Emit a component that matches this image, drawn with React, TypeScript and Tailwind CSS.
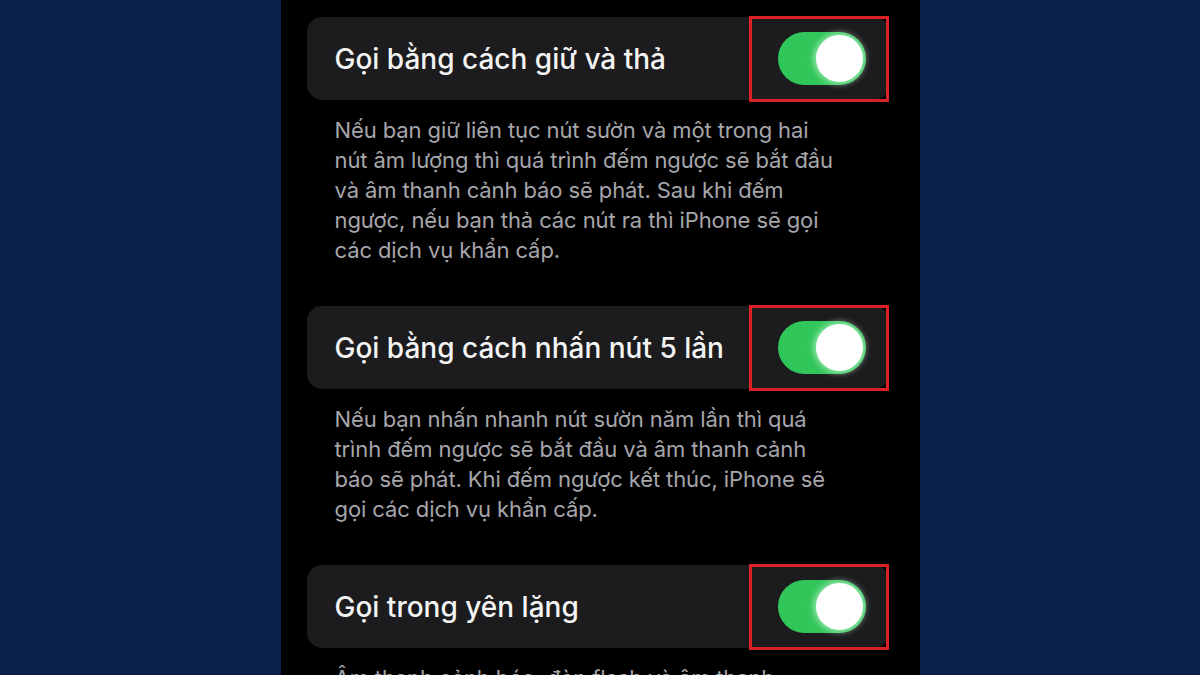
import React from 'react';

interface Setting {
  title: string;
  lines: string[];
}

const settings: Setting[] = [
  {
    title: 'Gọi bằng cách giữ và thả',
    lines: [
      'Nếu bạn giữ liên tục nút sườn và một trong hai',
      'nút âm lượng thì quá trình đếm ngược sẽ bắt đầu',
      'và âm thanh cảnh báo sẽ phát. Sau khi đếm',
      'ngược, nếu bạn thả các nút ra thì iPhone sẽ gọi',
      'các dịch vụ khẩn cấp.',
    ],
  },
  {
    title: 'Gọi bằng cách nhấn nút 5 lần',
    lines: [
      'Nếu bạn nhấn nhanh nút sườn năm lần thì quá',
      'trình đếm ngược sẽ bắt đầu và âm thanh cảnh',
      'báo sẽ phát. Khi đếm ngược kết thúc, iPhone sẽ',
      'gọi các dịch vụ khẩn cấp.',
    ],
  },
  {
    title: 'Gọi trong yên lặng',
    lines: ['Âm thanh cảnh báo, đèn flash và âm thanh'],
  },
];

function Toggle() {
  return (
    <div className="flex h-[53px] w-[88px] items-center justify-end rounded-full bg-[#31c65a] p-[3px]">
      <div className="h-[47px] w-[47px] rounded-full bg-white shadow-[0_0_6px_2px_rgba(230,255,235,0.6)]" />
    </div>
  );
}

export default function App() {
  return (
    <div
      className="flex h-[675px] w-[1200px] justify-center overflow-hidden bg-[#0b1f4b]"
      style={{ fontFamily: 'Inter, "Noto Sans", sans-serif' }}
    >
      <div className="flex w-[639px] flex-col bg-black pl-[26px] pr-[31px] pt-[17px]">
        {settings.map((s, i) => (
          <div key={i} className="mb-[41px]">
            <div className="relative flex h-[83px] items-center justify-between rounded-[15px] bg-[#1c1c1e] pl-[28px] pr-[23px]">
              <span className="text-[28px] font-medium leading-none text-[#f4f4f4]">{s.title}</span>
              <Toggle />
              <div className="absolute -bottom-[2px] right-0 -top-[1px] w-[140px] border-[3px] border-[#dc2126]" />
            </div>
            <div className="pl-[28px] pt-[15px] text-[22px] leading-[30px] tracking-[-0.1px] text-[#a6a6ab]">
              {s.lines.map((l, j) => (
                <div key={j} className="whitespace-nowrap">
                  {l}
                </div>
              ))}
            </div>
          </div>
        ))}
      </div>
    </div>
  );
}
